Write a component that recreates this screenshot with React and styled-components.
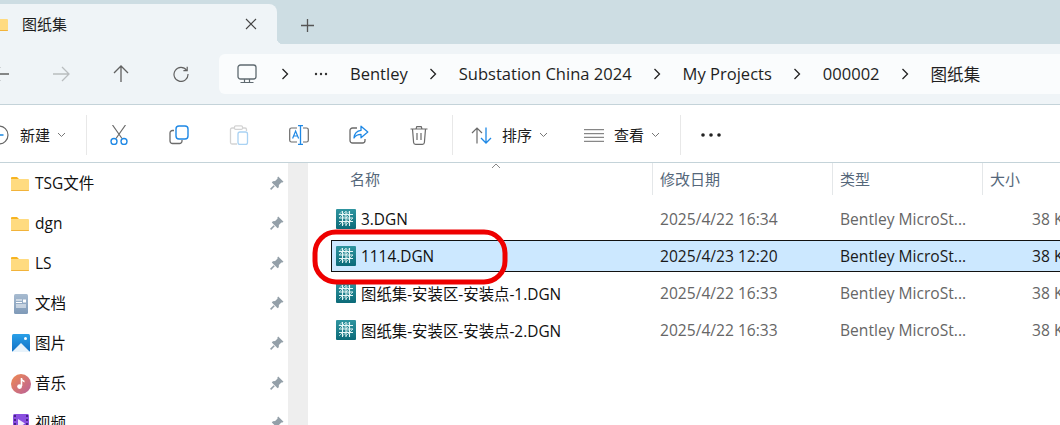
import React from 'react';
import styled, { createGlobalStyle } from 'styled-components';

const Global = createGlobalStyle`
  html, body { margin: 0; padding: 0; background: #fff; }
  body { font-family: "Open Sans", "Noto Sans CJK SC", sans-serif; }
`;
const Win = styled.div`
  position: relative; width: 1060px; height: 425px; overflow: hidden; background: #fff;
  display: flex; flex-direction: column; color: #1a1a1a;
`;
const TabStrip = styled.div`
  height: 44px; flex: none; background: #cddde3; display: flex; align-items: flex-end;
`;
const Tab = styled.div`
  width: 277px; height: 40px; flex: none; box-sizing: border-box; background: #eff4f7;
  border-top-right-radius: 8px; display: flex; align-items: center; padding-right: 20px; padding-bottom: 1px;
`;
const TabFolder = styled.span`
  display: flex; margin-left: -10px; margin-right: 14px;
`;
const TabTitle = styled.span`
  flex: 1; font-size: 15px; line-height: 20px; color: #1c1c1c; font-family: "Noto Sans CJK SC", sans-serif;
`;
const TabAdd = styled.div`
  width: 60px; height: 44px; box-sizing: border-box; display: flex; align-items: center; justify-content: center; padding-top: 7px; color: #555;
  background: #cddde3; position: relative;
  &::before {
    content: ""; position: absolute; left: 0; bottom: 0; width: 6px; height: 6px;
    background: radial-gradient(circle at 100% 0, #cddde3 6px, #eff4f7 6.5px);
  }
`;
const NavRow = styled.div`
  height: 61px; flex: none; box-sizing: border-box; background: #eff4f7; border-bottom: 1px solid #c4d3d9;
  display: flex; align-items: center; padding-bottom: 1px;
`;
const NavButtons = styled.div`
  display: flex; margin-left: -29px; margin-right: 8px; flex: none;
`;
const NavBtn = styled.div`
  width: 60px; height: 40px; display: flex; align-items: center; justify-content: center;
  color: ${p => p.$dim ? '#b9bdbf' : '#616161'};
`;
const Address = styled.div`
  flex: 1; height: 40px; background: #fafcfd; border-radius: 6px 0 0 6px; display: flex; align-items: center; padding-left: 18px;
`;
const Crumb = styled.span`
  font-size: 16.55px; color: #1f1f1f; white-space: nowrap; line-height: 22px;
  font-family: ${p => p.$cjk ? '"Noto Sans CJK SC", sans-serif' : '"Open Sans", sans-serif'};
`;
const Sep = styled.span`
  flex: none; width: ${p => p.$w || 51}px; display: flex; justify-content: center;
`;
const Dots = styled.span`
  flex: none; width: 17px; display: flex; justify-content: center;
`;
const Toolbar = styled.div`
  height: 58px; flex: none; box-sizing: border-box; border-bottom: 1px solid #c4d3d9; background: #fff;
  display: flex; align-items: center; padding-top: 3px;
`;
const NewBtn = styled.div`
  width: 86px; box-sizing: border-box; flex: none; display: flex; align-items: center;
`;
const NewIcon = styled.span`
  display: flex; margin-left: -11px; margin-right: 11px;
`;
const Label = styled.span`
  font-size: 15px; line-height: 20px; color: #1c1c1c; font-family: "Noto Sans CJK SC", sans-serif;
`;
const Caret = styled.span`
  display: flex; margin-left: ${p => p.$ml || 7}px;
`;
const Divider = styled.div`
  width: 1px; height: 40px; background: #e8e8e8; flex: none; margin: ${p => p.$m || '0'};
`;
const IconBtn = styled.div`
  width: 60px; height: 40px; flex: none; display: flex; align-items: center; justify-content: center;
`;
const MenuBtn = styled.div`
  flex: none; display: flex; align-items: center; width: ${p => p.$w}px; box-sizing: border-box; padding-left: ${p => p.$pl}px;
`;
const MenuIcon = styled.span`
  display: flex; margin-right: ${p => p.$mr || 10}px;
`;
const Body = styled.div`
  flex: 1; display: flex; min-height: 0;
`;
const Side = styled.div`
  width: 288px; flex: none; overflow: hidden; display: flex; flex-direction: column;
`;
const SideRow = styled.div`
  height: 40px; flex: none; display: flex; align-items: center; padding-left: 10px; padding-right: 4px;
`;
const SideIcon = styled.span`
  width: 20px; height: 20px; display: flex; align-items: center; margin-right: 4px; flex: none; padding-top: 1px; padding-left: 1px;
`;
const SideText = styled.span`
  flex: 1; font-size: 15.5px; line-height: 20px; color: #111; font-family: "Open Sans", "Noto Sans CJK SC", sans-serif;
`;
const Track = styled.div`
  width: 20px; flex: none; background: #eeeeee;
`;
const Main = styled.div`
  flex: 1; min-width: 0; padding-left: 23px; display: flex; flex-direction: column; position: relative;
`;
const Head = styled.div`
  display: grid; grid-template-columns: 321px 180px 150px 1fr; height: 32px; position: relative;
`;
const HeadCell = styled.div`
  font-size: 15px; line-height: 32px; color: #55677a; box-sizing: border-box; padding-left: ${p => p.$pl || 7}px;
  border-left: ${p => p.$first ? 'none' : '1px solid #e4e7e9'}; font-family: "Noto Sans CJK SC", sans-serif;
`;
const SortMark = styled.span`
  position: absolute; left: 160px; top: 0; display: flex;
`;
const List = styled.div`
  display: flex; flex-direction: column; gap: 5px; padding-top: 8px;
`;
const Row = styled.div`
  display: grid; grid-template-columns: 321px 180px 150px 1fr; height: 32px; box-sizing: border-box; align-items: center;
  margin-right: -4px; white-space: nowrap;
  ${p => p.$sel ? 'background:#cce8ff; border:1px solid #111; border-right:none;' : 'border:1px solid transparent;'}
`;
const NameCell = styled.div`
  display: flex; align-items: center; padding-left: 4px; font-size: 15.4px; color: #111; font-family: "Open Sans", "Noto Sans CJK SC", sans-serif;
`;
const FileIcon = styled.span`
  display: flex; margin-right: 5px;
`;
const Cell = styled.div`
  font-size: 15.6px; padding-left: ${p => p.$pl || 7}px; color: ${p => p.$sel ? '#1a1a1a' : '#666'}; overflow: hidden; font-family: "Open Sans", sans-serif;
`;
const Mark = styled.svg`
  position: absolute; left: 310px; top: 228px; pointer-events: none;
`;

const Folder = ({ w = 18, h = 14 }) => (
  <svg width={w} height={h} viewBox="0 0 18 14">
    <path d="M0 1a1 1 0 0 1 1-1h5l2 2H0z" fill="#f7b422" />
    <path d="M0 2h17a1 1 0 0 1 1 1v10a1 1 0 0 1-1 1H1a1 1 0 0 1-1-1z" fill="#ffdb80" />
    <path d="M0 13h18v.2a.8.8 0 0 1-.8.8H.8a.8.8 0 0 1-.8-.8z" fill="#f2b33a" />
  </svg>
);
const Pin = () => (
  <svg width="14" height="14" viewBox="0 0 14 14">
    <path d="M8.2.5 13.5 5.8 12.4 6.6 11.4 6.4 8.9 8.9 8.8 11.2 7.6 12.2 1.8 6.4 2.9 5.2 5.1 5.1 7.6 2.6 7.4 1.6z" fill="#94a0a9" />
    <path d="M4.2 9.8.6 13.4" stroke="#94a0a9" strokeWidth="1.6" />
  </svg>
);
const Chev = () => (
  <svg width="8" height="12" viewBox="0 0 8 12"><path d="M1.500 1 6.500 6l-5 5" fill="none" stroke="#222" strokeWidth="1.3" /></svg>
);
const Down = () => (
  <svg width="9" height="6" viewBox="0 0 9 6"><path d="M1 1l3.500 3.500L8 1" fill="none" stroke="#777" strokeWidth="1" /></svg>
);
const Dgn = () => (
  <svg width="20" height="20" viewBox="0 0 20 20">
    <defs><linearGradient id="dg" x1="0" y1="0" x2="0" y2="1"><stop offset="0" stopColor="#2f95a0" /><stop offset="1" stopColor="#0b6a78" /></linearGradient></defs>
    <rect width="20" height="20" rx="1" fill="url(#dg)" />
    <path d="M6.500 2v15M10 2v15M13.500 2v15M3 5.500h14M3 9h14M3 12.500h14" stroke="#e6f6f6" strokeWidth="1.100" />
    <path d="M3 5.500 6.500 2M3 9l6.500-6.500M6.500 9 13 2.500M10 9l3.500-3.500M3 16l3.500-3.500M6.500 16 13 9.500M10 16l7-7" stroke="#e6f6f6" strokeWidth="0.700" />
  </svg>
);
const DocIcon = () => (
  <svg width="20" height="20" viewBox="0 0 20 20">
    <defs><linearGradient id="doc" x1="0" y1="0" x2="0" y2="1"><stop offset="0" stopColor="#a7bbd0" /><stop offset="1" stopColor="#7f9ab8" /></linearGradient></defs>
    <rect x="3" y="0" width="14" height="20" rx="1.500" fill="url(#doc)" />
    <path d="M5 6h6M5 8.500h6M5 11h10M5 13h10" stroke="#fff" strokeWidth="1" />
    <rect x="12" y="5.500" width="3" height="3" fill="#fff" />
  </svg>
);
const PicIcon = () => (
  <svg width="20" height="20" viewBox="0 0 20 20">
    <defs><linearGradient id="pic" x1="0" y1="0" x2="0" y2="1"><stop offset="0" stopColor="#2aa0e8" /><stop offset="1" stopColor="#0f6fc4" /></linearGradient></defs>
    <rect x="1" y="0" width="18" height="18" rx="1.500" fill="url(#pic)" />
    <path d="M1 18 10 9l9 9z" fill="#e8f3fb" />
    <circle cx="14.500" cy="4.500" r="1.500" fill="#fff" />
  </svg>
);
const MusicIcon = () => (
  <svg width="20" height="20" viewBox="0 0 20 20">
    <defs><linearGradient id="mus" x1="0" y1="0" x2="1" y2="1"><stop offset="0" stopColor="#f08a50" /><stop offset="1" stopColor="#b8609a" /></linearGradient></defs>
    <circle cx="10" cy="10" r="10" fill="url(#mus)" />
    <path d="M10.500 4v8" stroke="#fff" strokeWidth="1.600" />
    <circle cx="8.600" cy="12.600" r="2.400" fill="#fff" />
    <path d="M10.500 4c.4 1.700 2 2 3 2.800v1.600c-1.200-.6-2.400-1-3-1.800z" fill="#fff" />
  </svg>
);
const VideoIcon = () => (
  <svg width="20" height="20" viewBox="0 0 20 20">
    <rect x="2" y="0" width="16" height="20" rx="1.500" fill="#8a4fe0" />
    <path d="M3 2h2M3 6h2M3 10h2M15 2h2M15 6h2M15 10h2" stroke="#35186e" strokeWidth="1.600" />
    <path d="M7 5v9l7-4.500z" fill="#efe7fb" />
  </svg>
);

const sideItems = [
  ['TSG文件', <Folder />],
  ['dgn', <Folder />],
  ['LS', <Folder />],
  ['文档', <DocIcon />],
  ['图片', <PicIcon />],
  ['音乐', <MusicIcon />],
  ['视频', <VideoIcon />],
];
const files = [
  ['3.DGN', '2025/4/22 16:34'],
  ['1114.DGN', '2025/4/23 12:20', true],
  ['图纸集-安装区-安装点-1.DGN', '2025/4/22 16:33'],
  ['图纸集-安装区-安装点-2.DGN', '2025/4/22 16:33'],
];
const crumbs = ['Bentley', 'Substation China 2024', 'My Projects', '000002'];

export default function App() {
  return (
    <Win>
      <Global />
      <TabStrip>
        <Tab>
          <TabFolder><Folder /></TabFolder>
          <TabTitle>图纸集</TabTitle>
          <svg width="12" height="12" viewBox="0 0 12 12"><path d="M1 1l10 10M11 1 1 11" stroke="#444" strokeWidth="1.100" /></svg>
        </Tab>
        <TabAdd>
          <svg width="13" height="13" viewBox="0 0 13 13"><path d="M6.500 0v13M0 6.500h13" stroke="#555" strokeWidth="1.300" /></svg>
        </TabAdd>
      </TabStrip>
      <NavRow>
        <NavButtons>
          <NavBtn><svg width="18" height="16" viewBox="0 0 18 16"><path d="M17 8H1M8 1 1 8l7 7" fill="none" stroke="currentColor" strokeWidth="1.300" /></svg></NavBtn>
          <NavBtn $dim><svg width="18" height="16" viewBox="0 0 18 16"><path d="M1 8h16M10 1l7 7-7 7" fill="none" stroke="currentColor" strokeWidth="1.300" /></svg></NavBtn>
          <NavBtn><svg width="16" height="18" viewBox="0 0 16 18"><path d="M8 17V1M1 8l7-7 7 7" fill="none" stroke="currentColor" strokeWidth="1.300" /></svg></NavBtn>
          <NavBtn><svg width="16" height="16" viewBox="0 0 16 16"><path d="M13.600 4.200A7 7 0 1 0 15 8" fill="none" stroke="currentColor" strokeWidth="1.200" /><path d="M14.200.8v3.800h-3.800" fill="none" stroke="currentColor" strokeWidth="1.200" /></svg></NavBtn>
        </NavButtons>
        <Address>
          <svg width="20" height="20" viewBox="0 0 20 20"><rect x="1" y="1" width="18" height="14" rx="2.500" fill="none" stroke="#5f6a70" strokeWidth="1.300" /><path d="M7.500 15v3M12.500 15v3M3.500 18.500h13" stroke="#5f6a70" strokeWidth="1.200" fill="none" /></svg>
          <Sep $w={55}><Chev /></Sep>
          <Dots><svg width="14" height="4" viewBox="0 0 14 4"><circle cx="2" cy="2" r="1.200" fill="#333" /><circle cx="7" cy="2" r="1.200" fill="#333" /><circle cx="12" cy="2" r="1.200" fill="#333" /></svg></Dots>
          <Sep $w={21} />
          {crumbs.map(c => (
            <React.Fragment key={c}>
              <Crumb>{c}</Crumb>
              <Sep><Chev /></Sep>
            </React.Fragment>
          ))}
          <Crumb $cjk>图纸集</Crumb>
        </Address>
      </NavRow>
      <Toolbar>
        <NewBtn>
          <NewIcon><svg width="20" height="20" viewBox="0 0 20 20"><circle cx="10" cy="10" r="9" fill="none" stroke="#666" strokeWidth="1.200" /><path d="M10 5.500v9M5.500 10h9" stroke="#1a86e0" strokeWidth="1.300" /></svg></NewIcon>
          <Label>新建</Label>
          <Caret $ml={7}><Down /></Caret>
        </NewBtn>
        <Divider $m="0 2px 0 0" />
        <IconBtn><svg width="20" height="20" viewBox="0 0 20 20"><path d="M3.500 0 13 13.500M16.500 0 7 13.500" stroke="#6b6b6b" strokeWidth="1.200" fill="none" /><circle cx="5" cy="16.500" r="3" fill="none" stroke="#1e88e5" strokeWidth="1.400" /><circle cx="15" cy="16.500" r="3" fill="none" stroke="#1e88e5" strokeWidth="1.400" /></svg></IconBtn>
        <IconBtn><svg width="20" height="20" viewBox="0 0 20 20"><path d="M5 5.500H3.500A2.500 2.500 0 0 0 1 8v8a2.500 2.500 0 0 0 2.500 2.500h7A2.500 2.500 0 0 0 13 16v-1" fill="none" stroke="#6b6b6b" strokeWidth="1.300" /><rect x="7" y="1" width="12" height="13" rx="3" fill="none" stroke="#1e88e5" strokeWidth="1.400" /></svg></IconBtn>
        <IconBtn><svg width="20" height="20" viewBox="0 0 20 20"><path d="M5 3H3a1.500 1.500 0 0 0-1.500 1.500v13A1.500 1.500 0 0 0 3 19h5" fill="none" stroke="#d3d3d3" strokeWidth="1.300" /><path d="M14 3h2a1.500 1.500 0 0 1 1.500 1.500V6" fill="none" stroke="#d3d3d3" strokeWidth="1.300" /><rect x="5.500" y="0.800" width="8" height="3.600" rx="1.200" fill="none" stroke="#d3d3d3" strokeWidth="1.200" /><rect x="9" y="7" width="9.500" height="12.500" rx="2" fill="none" stroke="#a9d2f3" strokeWidth="1.300" /></svg></IconBtn>
        <IconBtn><svg width="20" height="20" viewBox="0 0 20 20"><path d="M8 3H2.500A1.800 1.800 0 0 0 .7 4.800v10.400A1.800 1.800 0 0 0 2.500 17H8M14 3h3.500a1.800 1.800 0 0 1 1.800 1.800v10.400a1.800 1.800 0 0 1-1.800 1.800H14" fill="none" stroke="#6b6b6b" strokeWidth="1.200" /><path d="M3.600 13.500 6.600 6l3 7.500M4.700 11h3.800" fill="none" stroke="#1e88e5" strokeWidth="1.200" /><path d="M11.500 0v20M9 .6h5M9 19.400h5" stroke="#1e88e5" strokeWidth="1.300" /></svg></IconBtn>
        <IconBtn><svg width="20" height="20" viewBox="0 0 20 20"><path d="M8 3H3.500A2.500 2.500 0 0 0 1 5.500v10A2.500 2.500 0 0 0 3.500 18h10a2.500 2.500 0 0 0 2.500-2.500V14" fill="none" stroke="#6b6b6b" strokeWidth="1.300" /><path d="M12 1.200 18.800 7 12 12.800V9.400C8.600 9.400 6.600 10.600 5 13c.4-4.200 3-7.200 7-7.600z" fill="none" stroke="#1e88e5" strokeWidth="1.300" strokeLinejoin="round" /></svg></IconBtn>
        <IconBtn><svg width="18" height="20" viewBox="0 0 18 20"><path d="M.5 4h17M6 4l.8-2.400h4.400L12 4M2.500 4l1.100 13.500A2 2 0 0 0 5.600 19.300h6.800a2 2 0 0 0 2-1.800L15.500 4M7 8v7M11 8v7" fill="none" stroke="#6b6b6b" strokeWidth="1.200" /></svg></IconBtn>
        <Divider $m="0 0 0 3px" />
        <MenuBtn $w={112} $pl={18}>
          <MenuIcon $mr={10}><svg width="21" height="17" viewBox="0 0 21 17"><path d="M6 16.500V1M1 6l5-5 5 5" fill="none" stroke="#6b6b6b" strokeWidth="1.200" /><path d="M15 .5V16M10 11l5 5 5-5" fill="none" stroke="#1e88e5" strokeWidth="1.300" /></svg></MenuIcon>
          <Label>排序</Label>
          <Caret><Down /></Caret>
        </MenuBtn>
        <MenuBtn $w={115} $pl={19}>
          <MenuIcon><svg width="20" height="13" viewBox="0 0 20 13"><path d="M0 .7h20M0 4.700h20M0 8.300h20M0 12.300h20" stroke="#6b6b6b" strokeWidth="1" /></svg></MenuIcon>
          <Label>查看</Label>
          <Caret><Down /></Caret>
        </MenuBtn>
        <Divider />
        <IconBtn><svg width="20" height="4" viewBox="0 0 20 4"><circle cx="2" cy="2" r="1.800" fill="#222" /><circle cx="10" cy="2" r="1.800" fill="#222" /><circle cx="18" cy="2" r="1.800" fill="#222" /></svg></IconBtn>
      </Toolbar>
      <Body>
        <Side>
          {sideItems.map(([t, icon]) => (
            <SideRow key={t}>
              <SideIcon>{icon}</SideIcon>
              <SideText>{t}</SideText>
              <Pin />
            </SideRow>
          ))}
        </Side>
        <Track />
        <Main>
          <Head>
            <HeadCell $first $pl={19}>名称</HeadCell>
            <HeadCell>修改日期</HeadCell>
            <HeadCell>类型</HeadCell>
            <HeadCell>大小</HeadCell>
            <SortMark><svg width="10" height="6" viewBox="0 0 10 6"><path d="M1 5l4-4 4 4" fill="none" stroke="#888" strokeWidth="1" /></svg></SortMark>
          </Head>
          <List>
            {files.map(([n, d, sel]) => (
              <Row key={n} $sel={sel}>
                <NameCell><FileIcon><Dgn /></FileIcon>{n}</NameCell>
                <Cell $sel={sel}>{d}</Cell>
                <Cell $sel={sel}>Bentley MicroSt...</Cell>
                <Cell $sel={sel} $pl={49}>38 KB</Cell>
              </Row>
            ))}
          </List>
        </Main>
      </Body>
      <Mark width="200" height="58" viewBox="0 0 200 58">
        <rect x="5" y="4" width="190" height="50" rx="21" fill="none" stroke="#ee0000" strokeWidth="5" />
      </Mark>
    </Win>
  );
}
